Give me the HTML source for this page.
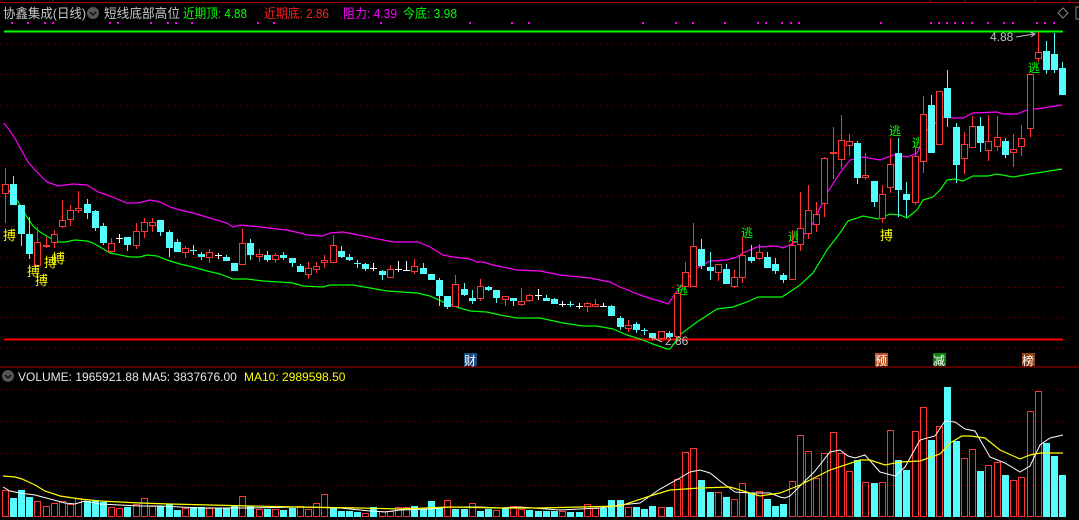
<!DOCTYPE html>
<html><head><meta charset="utf-8"><style>
html,body{margin:0;padding:0;background:#000;width:1079px;height:520px;overflow:hidden}
svg{display:block}
text{font-family:"Liberation Sans","Noto Sans CJK SC",sans-serif}
</style></head><body>
<svg id="s" width="1079" height="520" xmlns="http://www.w3.org/2000/svg">
<rect width="1079" height="520" fill="#000"/>
<line x1="0" y1="2.5" x2="1079" y2="2.5" stroke="#a00000"/>
<line x1="0" y1="0" x2="0" y2="3" stroke="#a00000"/>
<line x1="53" y1="0" x2="53" y2="3" stroke="#a00000"/>
<line x1="930" y1="0" x2="930" y2="3" stroke="#a00000"/>
<line x1="965" y1="0" x2="965" y2="3" stroke="#a00000"/>
<line x1="1035" y1="0" x2="1035" y2="3" stroke="#a00000"/>
<line x1="1070" y1="0" x2="1070" y2="3" stroke="#a00000"/>
<g id="grid" stroke="#8a0000" stroke-dasharray="1,5"></g>
<line x1="0" y1="367" x2="1079" y2="367" stroke="#b00000"/>
<line x1="4" y1="31.5" x2="1063" y2="31.5" stroke="#00ff00" stroke-width="2"/>
<line x1="4" y1="339.5" x2="1063" y2="339.5" stroke="#ff0000" stroke-width="2"/>
<g id="dots" fill="#ff00ff"></g>
<text x="3" y="18" font-size="13" fill="#c8c8c8" textLength="83" lengthAdjust="spacingAndGlyphs">协鑫集成(日线)</text>
<circle cx="93" cy="13" r="6" fill="#555"/>
<path d="M90 12 L93 15 L96 12" stroke="#111" stroke-width="1.5" fill="none"/>
<text x="104" y="18" font-size="13" fill="#c8c8c8" textLength="76" lengthAdjust="spacingAndGlyphs">短线底部高位</text>
<text x="183" y="18" font-size="13" fill="#00ff00" textLength="64" lengthAdjust="spacingAndGlyphs">近期顶: 4.88</text>
<text x="264" y="18" font-size="13" fill="#ff2020" textLength="65" lengthAdjust="spacingAndGlyphs">近期底: 2.86</text>
<text x="343" y="18" font-size="13" fill="#ff00ff" textLength="54" lengthAdjust="spacingAndGlyphs">阻力: 4.39</text>
<text x="403" y="18" font-size="13" fill="#00ff00" textLength="54" lengthAdjust="spacingAndGlyphs">今底: 3.98</text>
<path d="M1063 8 L1068 13 L1063 18 L1058 13 Z" stroke="#888" fill="none"/>
<path d="M1079 7 L1076 7 L1076 19 L1079 19" stroke="#888" fill="none"/>
<polyline id="mag" fill="none" stroke="#ff00ff" stroke-width="1.2"/>
<polyline id="grn" fill="none" stroke="#00ff00" stroke-width="1.2"/>
<g font-size="12" fill="#00ff00">
<text x="676" y="294">逃</text><text x="741" y="237">逃</text><text x="889" y="135">逃</text><text x="788" y="241">逃</text><text x="912" y="147">逃</text><text x="1028" y="72">逃</text>
</g>
<g id="candles"></g>
<g font-size="13" fill="#ffff00">
<text x="3" y="240">搏</text><text x="27" y="276">搏</text><text x="35" y="285">搏</text><text x="44" y="267">搏</text><text x="52" y="263">搏</text><text x="880" y="240">搏</text>
</g>
<text x="990" y="41" font-size="12" fill="#c0c0c0">4.88</text>
<path d="M1016 37 L1034 34 M1030 32 L1035 34 L1031 37" stroke="#c0c0c0" fill="none"/>
<text x="665" y="345" font-size="12" fill="#c0c0c0">2.86</text>
<path d="M652 337 L662 342 M652 337 L656 336 M652 337 L653 340" stroke="#c0c0c0" fill="none"/>
<rect x="464" y="353" width="13" height="13" fill="#1a4a80"/><text x="464" y="365" font-size="12" fill="#fff">财</text>
<rect x="875" y="353" width="13" height="13" fill="#c05020"/><text x="875" y="365" font-size="12" fill="#fff">预</text>
<rect x="933" y="353" width="13" height="13" fill="#108010"/><text x="933" y="365" font-size="12" fill="#fff">减</text>
<rect x="1022" y="353" width="13" height="13" fill="#8a4010"/><text x="1022" y="365" font-size="12" fill="#fff">榜</text>
<circle cx="8" cy="376" r="6" fill="#555"/>
<path d="M5 375 L8 378 L11 375" stroke="#111" stroke-width="1.5" fill="none"/>
<text x="18" y="381" font-size="12" fill="#e8e8e8">VOLUME: 1965921.88  MA5: 3837676.00</text>
<text x="244" y="381" font-size="12" fill="#ffff00">MA10: 2989598.50</text>
<g id="vol"></g>
<polyline id="vw" fill="none" stroke="#ffffff" stroke-width="1"/>
<polyline id="vy" fill="none" stroke="#ffff00" stroke-width="1.2"/>
</svg>
<script>
var NS="http://www.w3.org/2000/svg";
function el(p,t,a){var e=document.createElementNS(NS,t);for(var k in a)e.setAttribute(k,a[k]);p.appendChild(e);return e;}
var g=document.getElementById('grid');
[44,74,105,135,165,196,226,257,287,317,348,389,421,453,485].forEach(function(y){el(g,'line',{x1:0,y1:y+.5,x2:1063,y2:y+.5});});
var d=document.getElementById('dots');
[12,28,45,53,110,118,151,168,176,192,258,274,381,470,512,529,643,676,693,725,758,766,782,791,799,881,931,939,947,955,963,972,988,1004,1013,1037,1045,1054].forEach(function(x){el(d,'rect',{x:x-1,y:22,width:2,height:2});});
function pts(a){return a.map(function(p){return p[0]+','+p[1]}).join(' ');}
document.getElementById('mag').setAttribute('points',pts([[4,123],[13,135],[28,162],[35,170],[47,182],[58,186],[73,184],[87,185],[98,192],[107,195],[117,199],[127,203],[138,203],[150,200],[160,202],[170,207],[180,210],[193,213],[210,218],[227,223],[233,227],[240,225],[260,227],[277,229],[287,230],[300,233],[307,235],[323,236],[330,233],[343,232],[363,236],[393,242],[418,242],[430,247],[443,255],[453,257],[470,259],[477,262],[483,262],[493,265],[517,270],[540,271],[560,275],[590,278],[610,282],[620,287],[640,295],[652,299],[663,302],[668,304],[680,287],[697,268],[710,261],[727,260],[737,257],[743,253],[757,247],[777,246],[783,248],[800,240],[813,223],[827,193],[840,173],[850,160],[863,157],[880,160],[893,155],[907,157],[917,153],[927,130],[943,117],[953,118],[963,118],[973,113],[997,112],[1003,114],[1017,114],[1027,110],[1043,108],[1062,105]]));
document.getElementById('grn').setAttribute('points',pts([[7,188],[17,200],[27,217],[33,226],[40,232],[50,238],[58,242],[65,242],[75,240],[87,241],[93,243],[100,247],[110,253],[120,255],[130,257],[140,257],[147,255],[157,256],[167,260],[180,264],[193,267],[207,271],[220,274],[233,279],[247,279],[263,281],[280,282],[293,283],[303,286],[323,287],[330,285],[353,285],[370,288],[387,291],[417,293],[430,296],[443,302],[457,307],[470,311],[487,312],[500,315],[517,318],[540,318],[563,323],[583,326],[597,326],[613,329],[627,335],[640,339],[653,344],[667,349],[670,349],[682,333],[697,322],[717,309],[733,307],[747,302],[758,297],[782,297],[800,285],[813,273],[827,250],[840,233],[848,221],[863,216],[878,219],[890,214],[900,215],[907,218],[917,210],[923,200],[933,197],[940,190],[947,180],[955,179],[963,181],[973,176],[988,176],[997,174],[1013,177],[1030,174],[1043,172],[1062,169]]));
var C=[[168,184,194,223,'r'],[176,184,205,205,'c'],[205,205,234,246,'c'],[217,234,254,259,'c'],[227,242,266,267,'r'],[237,245,247,248,'r'],[230,234,243,248,'r'],[200,220,227,228,'r'],[205,210,220,226,'r'],[191,208,211,213,'r'],
[199,204,213,219,'c'],[210,211,228,231,'c'],[223,226,243,245,'c'],[238,243,252,253,'r'],[234,238,238,243,'w'],[237,237,245,251,'c'],[223,231,246,249,'r'],[218,222,232,238,'r'],[218,222,226,232,'r'],[220,220,232,236,'c'],
[230,232,248,257,'c'],[239,242,252,252,'c'],[246,248,253,258,'r'],[245,250,250,255,'k'],[252,254,257,260,'c'],[249,252,258,263,'r'],[253,255,255,259,'w'],[255,257,261,261,'c'],[263,263,271,271,'c'],[229,243,265,265,'r'],
[239,243,255,260,'c'],[249,254,257,262,'r'],[251,255,260,262,'c'],[253,255,260,263,'r'],[252,255,258,260,'c'],[258,258,263,267,'c'],[264,266,272,272,'c'],[262,268,275,279,'r'],[262,266,270,273,'r'],[255,260,263,268,'r'],
[235,245,263,263,'r'],[246,251,257,258,'c'],[254,257,260,261,'c'],[260,263,263,268,'k'],[263,264,269,271,'c'],[263,268,268,271,'w'],[270,271,275,280,'c'],[265,269,278,278,'r'],[261,269,269,272,'w'],[261,270,270,271,'w'],
[259,266,272,274,'r'],[263,268,274,274,'c'],[274,274,280,280,'c'],[278,280,296,306,'c'],[296,296,307,309,'c'],[275,284,307,307,'r'],[283,289,295,296,'c'],[290,298,301,304,'c'],[279,286,299,301,'r'],[286,287,290,291,'c'],
[290,290,298,303,'c'],[296,296,300,306,'r'],[298,298,301,306,'c'],[288,301,305,306,'r'],[294,295,301,302,'r'],[289,295,295,300,'w'],[295,298,301,301,'c'],[298,299,304,304,'c'],[301,304,304,307,'w'],[301,304,304,307,'k'],
[303,306,306,309,'w'],[302,303,307,312,'r'],[299,304,307,307,'r'],[303,306,306,306,'w'],[305,306,316,316,'c'],[316,318,327,330,'c'],[320,325,329,332,'r'],[322,324,330,333,'c'],[328,330,330,335,'k'],[333,333,338,338,'c'],
[331,331,339,339,'r'],[331,333,337,337,'c'],[293,293,337,337,'r'],[262,272,287,290,'r'],[223,246,287,287,'r'],[239,249,266,269,'c'],[252,267,271,280,'c'],[264,264,273,281,'r'],[264,269,284,284,'c'],[270,277,287,288,'r'],
[237,255,278,283,'r'],[245,257,261,263,'c'],[244,252,259,260,'r'],[252,257,268,268,'c'],[258,264,271,274,'c'],[273,275,280,283,'c'],[230,245,280,280,'r'],[192,228,245,251,'r'],[185,210,234,239,'r'],[202,214,225,232,'r'],
[157,158,204,217,'r'],[127,152,154,179,'r'],[115,140,160,169,'r'],[134,141,146,156,'r'],[141,143,178,184,'c'],[153,175,178,180,'r'],[181,181,202,207,'c'],[185,194,219,223,'r'],[138,164,188,193,'r'],[138,153,190,217,'c'],
[182,194,200,217,'c'],[147,156,203,205,'r'],[96,114,162,173,'r'],[95,105,153,153,'c'],[91,91,145,145,'r'],[70,88,118,127,'c'],[123,127,165,183,'c'],[132,144,159,174,'r'],[116,126,148,148,'r'],[117,126,143,152,'c'],
[115,141,151,161,'r'],[116,137,147,151,'r'],[138,141,155,158,'c'],[134,149,153,167,'r'],[125,138,147,156,'r'],[74,74,129,137,'r'],[32,52,59,62,'r'],[41,51,70,74,'c'],[33,54,70,73,'c'],[62,68,95,95,'c']];
var cg=document.getElementById('candles');
var RED='#ff3434',CY='#54fcfc';
C.forEach(function(c,i){
 var x=Math.round(4.5+8.2*i)+.5,h=c[0],t=c[1],b=c[2],l=c[3],k=c[4];
 if(k=='w'||k=='k'){var col=k=='w'?'#fff':CY;el(cg,'line',{x1:x,y1:h,x2:x,y2:l,stroke:col});el(cg,'line',{x1:x-3.5,y1:t+.5,x2:x+3.5,y2:t+.5,stroke:col});return;}
 var col=k=='r'?RED:CY;
 el(cg,'line',{x1:x,y1:h,x2:x,y2:l,stroke:col});
 if(b-t<2){el(cg,'rect',{x:x-3.5,y:t,width:7,height:2,fill:col});return;}
 if(k=='r')el(cg,'rect',{x:x-3,y:t+.5,width:6,height:b-t-1,fill:'#000',stroke:col});
 else el(cg,'rect',{x:x-3.5,y:t,width:7,height:b-t,fill:col});
});
var V=[[490,'r'],[498,'c'],[490,'c'],[497,'c'],[501,'r'],[506,'r'],[503,'r'],[501,'r'],[504,'r'],[498,'r'],[501,'c'],[501,'c'],[502,'c'],[507,'r'],[508,'r'],[507,'c'],[504,'r'],[498,'r'],[506,'r'],[506,'c'],
[504,'c'],[510,'c'],[508,'r'],[507,'c'],[507,'c'],[508,'r'],[508,'c'],[508,'c'],[506,'c'],[496,'r'],[506,'c'],[509,'r'],[509,'c'],[509,'r'],[510,'c'],[508,'c'],[506,'r'],[509,'r'],[503,'r'],[494,'r'],
[507,'c'],[511,'c'],[511,'c'],[512,'c'],[513,'r'],[507,'c'],[511,'r'],[511,'r'],[507,'r'],[507,'r'],[506,'c'],[509,'c'],[501,'c'],[507,'c'],[500,'r'],[509,'c'],[509,'c'],[503,'r'],[511,'c'],[509,'c'],
[510,'r'],[508,'c'],[506,'r'],[509,'r'],[510,'c'],[511,'c'],[511,'c'],[511,'c'],[511,'r'],[512,'c'],[512,'c'],[504,'r'],[508,'r'],[508,'c'],[500,'c'],[500,'c'],[507,'r'],[507,'c'],[509,'c'],[506,'c'],
[507,'r'],[507,'c'],[479,'r'],[452,'r'],[448,'r'],[480,'c'],[492,'c'],[492,'r'],[497,'c'],[499,'r'],[483,'r'],[493,'c'],[491,'r'],[499,'c'],[506,'c'],[504,'c'],[481,'r'],[435,'r'],[451,'r'],[478,'r'],
[453,'r'],[432,'r'],[453,'r'],[471,'r'],[460,'c'],[482,'r'],[483,'c'],[482,'r'],[430,'r'],[460,'c'],[470,'c'],[431,'r'],[407,'r'],[440,'c'],[426,'r'],[387,'c'],[441,'c'],[458,'r'],[449,'r'],[471,'c'],
[465,'r'],[462,'r'],[475,'c'],[480,'r'],[477,'r'],[411,'r'],[391,'r'],[443,'c'],[456,'c'],[475,'c']];
var vg=document.getElementById('vol');
V.forEach(function(v,i){var x=Math.round(4.5+8.2*i)+.5,t=v[0];
 if(v[1]=='r')el(vg,'rect',{x:x-3,y:t+.5,width:6,height:517-t-1,fill:'none',stroke:RED});
 else el(vg,'rect',{x:x-3.5,y:t,width:7,height:517-t,fill:CY});});
document.getElementById('vw').setAttribute('points',pts([[3,487],[10,491],[20,493],[35,495],[50,499],[65,503],[75,504],[85,501],[100,504],[120,505],[140,506],[160,506],[180,507],[200,508],[250,508],[300,507],[340,508],[370,511],[385,512],[400,510],[430,509],[450,507],[480,507],[500,508],[520,507],[560,510],[600,508],[620,505],[640,503],[660,489],[680,478],[690,472],[700,470],[710,473],[720,481],[735,492],[750,493],[770,493],[780,497],[785,498],[790,496],[800,486],[815,471],[830,452],[840,450],[848,456],[855,458],[865,455],[880,472],[895,476],[905,467],[920,440],[935,436],[945,421],[955,422],[965,429],[975,431],[990,457],[1005,463],[1020,472],[1030,466],[1040,445],[1050,438],[1063,435]]));
document.getElementById('vy').setAttribute('points',pts([[3,476],[15,477],[22,479],[35,485],[45,491],[60,496],[80,499],[100,501],[120,502],[140,503],[170,504],[210,505],[250,506],[300,507],[360,508],[400,509],[450,507],[500,508],[540,508],[580,507],[620,506],[650,496],[670,490],[700,488],[730,487],[750,493],[760,496],[780,493],[800,485],[830,470],[860,460],[870,460],[885,465],[900,462],[920,461],[940,454],[950,443],[962,436],[970,436],[985,438],[1000,450],[1020,459],[1030,455],[1040,453],[1063,453]]));
</script>
</body></html>
